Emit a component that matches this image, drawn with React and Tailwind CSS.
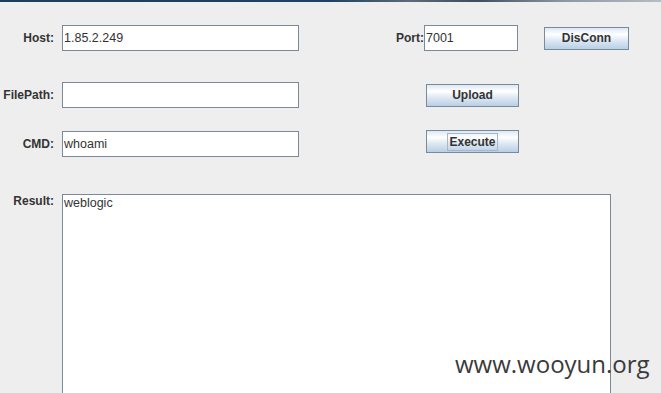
import React from 'react';

// Swing Metal/Ocean look-alike: the WebLogic exploit tool window
const font = { fontFamily: '"Liberation Sans", Arial, sans-serif' };

const Field = ({ value, className = '' }) => (
  <div
    className={`h-[26px] bg-white border border-[#7a8a99] flex items-center pl-[1px] text-[12.5px] text-[#333333] ${className}`}
  >
    {value}
  </div>
);

const Button = ({ children, className = '', focused = false }) => (
  <div
    className={`h-[23px] border border-[#7a8a99] flex items-center justify-center text-[12px] font-bold text-[#333333] bg-[linear-gradient(to_bottom,#dde8f3_0%,#ffffff_30%,#dde8f3_60%,#b8cfe5_100%)] ${className}`}
  >
    {focused ? (
      <span className="border border-[#a3b8cc] px-[1px] leading-[16px]">{children}</span>
    ) : (
      children
    )}
  </div>
);

const Label = ({ children, className = '' }) => (
  <div className={`w-[54px] text-right text-[12px] font-bold text-[#333333] shrink-0 ${className}`}>
    {children}
  </div>
);

const App = () => {
  return (
    <div className="relative w-[661px] h-[393px] bg-[#eeeeee] overflow-hidden" style={font}>
      {/* title bar edge */}
      <div className="h-[2px] bg-[linear-gradient(to_right,#1b3e5c_0%,#1f4262_50%,#5d6b78_62%,#3d4d5c_72%,#8a97a3_85%,#b4bcc4_100%)]" />

      {/* Host / Port / DisConn */}
      <div className="mt-[23px] flex items-center h-[26px]">
        <Label>Host:</Label>
        <Field value="1.85.2.249" className="ml-[8px] w-[237px]" />
        <div className="w-[125px] text-right text-[12px] font-bold text-[#333333]">Port:</div>
        <Field value="7001" className="w-[94px]" />
        <Button className="ml-[26px] w-[85px]">DisConn</Button>
      </div>

      {/* FilePath / Upload */}
      <div className="mt-[31px] flex items-center h-[26px]">
        <Label>FilePath:</Label>
        <Field value="" className="ml-[8px] w-[237px]" />
        <Button className="ml-[127px] w-[93px]">Upload</Button>
      </div>

      {/* CMD / Execute */}
      <div className="mt-[23px] flex items-start h-[26px]">
        <Label className="leading-[26px]">CMD:</Label>
        <Field value="whoami" className="ml-[8px] w-[237px]" />
        <Button focused className="ml-[127px] w-[93px] -mt-[1px]">Execute</Button>
      </div>

      {/* Result */}
      <div className="mt-[37px] flex items-start">
        <Label className="leading-[14px]">Result:</Label>
        <div className="ml-[8px] w-[549px] h-[220px] bg-white border border-[#7a8a99] pl-[1px] text-[12.5px] leading-[17px] text-[#333333]">
          weblogic
        </div>
      </div>

      {/* watermark */}
      <div
        className="absolute left-[455px] top-[346px] text-[24px] text-[#3a3a3a]"
        style={{ fontFamily: '"Open Sans", "DejaVu Sans", sans-serif' }}
      >
        www.wooyun.org
      </div>
    </div>
  );
};

export default App;
